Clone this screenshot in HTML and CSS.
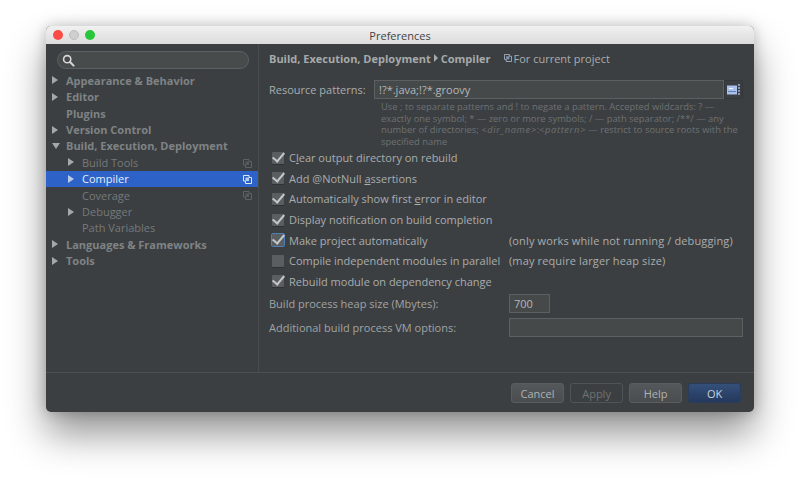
FILE: index.html
```html
<!DOCTYPE html>
<html lang="en">
<head>
<meta charset="utf-8">
<title>Preferences</title>
<link rel="stylesheet" href="styles.css">
</head>
<body>
<div class="window">
  <header class="titlebar">
    <div class="lights"><span class="light red"></span><span class="light gray"></span><span class="light green"></span></div>
    <div class="title">Preferences</div>
  </header>
  <div class="content">
    <nav class="sidebar">
      <div class="search">
        <svg class="search-icon" width="13" height="13" viewBox="0 0 13 13"><circle cx="5.2" cy="5.2" r="3.6" fill="none" stroke="#d8d8d8" stroke-width="1.6"/><path d="M8 8l3.6 3.6" stroke="#d8d8d8" stroke-width="2" stroke-linecap="round"/></svg>
      </div>
      <ul class="tree">
        <li class="row top"><span class="arrow"></span>Appearance &amp; Behavior</li>
        <li class="row top"><span class="arrow"></span>Editor</li>
        <li class="row top"><span class="noarrow"></span>Plugins</li>
        <li class="row top"><span class="arrow"></span>Version Control</li>
        <li class="row top"><span class="arrow down"></span>Build, Execution, Deployment</li>
        <li class="row sub"><span class="arrow"></span>Build Tools<svg class="copy" width="9" height="9" viewBox="0 0 9 9"><path d="M.5.5h5.500v2h2.500v6h-6v-2.500h-2z" fill="none" stroke="#5e6263"/><path d="M2.500 2.500h3.500v3.500h-3.500z" fill="#55595a"/></svg></li>
        <li class="row sub selected"><span class="arrow"></span>Compiler<svg class="copy" width="9" height="9" viewBox="0 0 9 9"><path d="M.5.5h5.500v2h2.500v6h-6v-2.500h-2z" fill="none" stroke="#dbe6f7"/><path d="M2.500 2.500h3.500v3.500h-3.500z" fill="#b8ccec"/></svg></li>
        <li class="row sub dim"><span class="noarrow"></span>Coverage<svg class="copy" width="9" height="9" viewBox="0 0 9 9"><path d="M.5.5h5.500v2h2.500v6h-6v-2.500h-2z" fill="none" stroke="#5e6263"/><path d="M2.500 2.500h3.500v3.500h-3.500z" fill="#55595a"/></svg></li>
        <li class="row sub"><span class="arrow"></span>Debugger</li>
        <li class="row sub"><span class="noarrow"></span>Path Variables</li>
        <li class="row top"><span class="arrow"></span>Languages &amp; Frameworks</li>
        <li class="row top"><span class="arrow"></span>Tools</li>
      </ul>
    </nav>
    <main class="panel">
      <div class="crumbs">
        <strong>Build, Execution, Deployment</strong><span class="crumb-arrow"></span><strong>Compiler</strong>
        <span class="scope"><svg width="8" height="8" viewBox="0 0 9 9"><path d="M.5.5h5.500v2h2.500v6h-6v-2.500h-2z" fill="none" stroke="#a9b4c4"/><path d="M2.500 2.500h3.500v3.500h-3.500z" fill="#7f95b5"/></svg>For current project</span>
      </div>
      <div class="pattern-row">
        <label class="pattern-label">Resource patterns:</label>
        <div class="input pattern-input">!?*.java;!?*.groovy</div>
        <button class="browse" type="button"><svg width="14" height="12" viewBox="0 0 14 12"><rect x="0" y="1.500" width="10" height="9" fill="#a9c1ea"/><rect x="2" y="4" width="4" height="1" fill="#f0f5ff"/><rect x="1" y="7" width="8" height="1" fill="#5f7fb8"/><path d="M11 0h2v2h-2zM11 3h2v2h-2zM11 6h2v2h-2zM11 9h2v2h-2z" fill="#8a97aa"/></svg></button>
      </div>
      <p class="hint">Use ; to separate patterns and ! to negate a pattern. Accepted wildcards: ? — exactly one symbol; * — zero or more symbols; / — path separator; /**/ — any number of directories; <i>&lt;dir_name&gt;</i>:<i>&lt;pattern&gt;</i> — restrict to source roots with the specified name</p>
      <ul class="options">
        <li class="option"><span class="check on"></span><span class="opt-label">C<u>l</u>ear output directory on rebuild</span></li>
        <li class="option"><span class="check on"></span><span class="opt-label">Add @NotNull <u>a</u>ssertions</span></li>
        <li class="option"><span class="check on"></span><span class="opt-label">Automatically show first <u>e</u>rror in editor</span></li>
        <li class="option"><span class="check on"></span><span class="opt-label">Display notification on build completion</span></li>
        <li class="option"><span class="check on focus"></span><span class="opt-label wide">Make project automatically</span><span class="note">(only works while not running / debugging)</span></li>
        <li class="option"><span class="check"></span><span class="opt-label wide">Compile independent modules in parallel</span><span class="note">(may require larger heap size)</span></li>
        <li class="option"><span class="check on"></span><span class="opt-label">Rebuild module on dependency change</span></li>
      </ul>
      <div class="field-row heap"><label class="field-label">Build process heap size (Mbytes):</label><div class="input heap-input">700</div></div>
      <div class="field-row vm"><label class="field-label">Additional build process VM options:</label><div class="input vm-input"></div></div>
    </main>
  </div>
  <footer class="footer">
    <button class="btn" type="button">Cancel</button>
    <button class="btn disabled" type="button">Apply</button>
    <button class="btn" type="button">Help</button>
    <button class="btn primary" type="button">OK</button>
  </footer>
</div>
</body>
</html>
```
FILE: styles.css
```css
* { box-sizing: border-box; }
html, body { margin: 0; height: 478px; overflow: hidden; background: #fff; }
body { padding: 26px 46px 0; font-family: "Open Sans", sans-serif; font-size: 11px; color: #a9adae; }
ul { list-style: none; margin: 0; padding: 0; }
.window { width: 708px; height: 386px; display: flex; flex-direction: column; background: #3c3f41; border-radius: 5px; box-shadow: 0 22px 38px rgba(0,0,0,.42), 0 0 14px rgba(0,0,0,.22); }
.titlebar { height: 18px; display: flex; align-items: center; position: relative; background: linear-gradient(#f1f1f1, #dcdcdc); border-radius: 5px 5px 0 0; flex: none; }
.lights { display: flex; gap: 6px; padding-left: 7px; }
.light { width: 10px; height: 10px; border-radius: 50%; }
.red { background: #fc4b46; }
.gray { background: #cfcfcf; border: 1px solid #bdbdbd; }
.green { background: #27c63b; }
.title { position: absolute; left: 0; right: 0; text-align: center; color: #444; font-size: 11px; }
.content { flex: 1; display: flex; min-height: 0; }
.sidebar { width: 213px; flex: none; border-right: 1px solid #494c4e; padding-top: 7px; }
.search { margin: 0 9px 0 11px; height: 18px; border: 1px solid #5c6061; border-radius: 9px; background: #484b4c; display: flex; align-items: center; padding-left: 4px; }
.search-icon { display: block; }
.tree { margin-top: 3.7px; }
.row { height: 16.4px; padding-bottom: 1px; display: flex; align-items: center; white-space: nowrap; position: relative; }
.top { padding-left: 6px; font-weight: 700; color: #7f8385; }
.sub { padding-left: 22px; color: #76797b; }
.arrow { width: 0; height: 0; margin-right: 8px; border-style: solid; border-width: 4px 0 4px 6px; border-color: transparent transparent transparent #a5a8a9; flex: none; }
.arrow.down { border-width: 6px 4px 0; border-color: #a5a8a9 transparent transparent; margin-right: 6px; }
.noarrow { width: 14px; flex: none; }
.selected { background: #2d62c8; color: #e6eefb; }
.selected .arrow { border-left-color: #b9c9e6; }
.copy { position: absolute; right: 6px; top: 4px; }
.panel { flex: 1; padding: 7px 11px 0 10px; min-width: 0; }
.crumbs { height: 14px; display: flex; align-items: center; white-space: nowrap; }
.crumbs strong { font-weight: 700; color: #a6aaab; }
.crumb-arrow { width: 0; height: 0; margin: 0 3px; border-style: solid; border-width: 4px 0 4px 4px; border-color: transparent transparent transparent #a6aaab; }
.scope { display: flex; align-items: center; gap: 2px; margin-left: 13px; }
.pattern-row { display: flex; align-items: center; margin-top: 15px; height: 19px; }
.pattern-label { width: 105px; flex: none; white-space: nowrap; }
.input { background: #45494a; border: 1px solid #5d6061; height: 19px; line-height: 17px; padding: 0 4px; color: #b4b7b8; }
.pattern-input { width: 350px; flex: none; }
.browse { width: 19px; height: 19px; border: 1px solid #34373a; border-radius: 2px; background: #3a3d42; padding: 0 0 0 2px; display: flex; align-items: center; }
.hint { margin: 2px 0 0 112px; font-size: 9.4px; line-height: 11.5px; color: #6d7173; width: 361px; }
.hint i { letter-spacing: .6px; }
.options { margin-top: .5px; }
.option { height: 20.6px; display: flex; align-items: center; white-space: nowrap; padding-left: 3px; }
.check { width: 12px; height: 12px; margin-right: 5px; flex: none; background: #5b5e60; border-radius: 1px; position: relative; box-shadow: 0 1px 0 #2f3133; }
.check.on::after { content: ""; position: absolute; left: 3px; top: -2px; width: 5px; height: 10px; border: solid #c4c7c8; border-width: 0 2px 2px 0; transform: rotate(40deg); }
.check.focus { outline: 1.5px solid #4f7fb5; }
.wide { width: 220px; flex: none; }
.note { letter-spacing: .13px; }
.field-row { display: flex; align-items: center; }
.heap { margin-top: 2.500px; }
.vm { margin-top: 5px; }
.field-label { width: 240px; flex: none; white-space: nowrap; color: #a0a4a5; }
.heap-input { width: 41px; }
.vm-input { width: 235px; }
.footer { height: 40px; flex: none; border-top: 1px solid #4d5051; display: flex; justify-content: flex-end; gap: 5.9px; padding: 10px 12.7px 0 0; border-radius: 0 0 5px 5px; }
.btn { width: 53.2px; height: 20px; padding: 0; font: inherit; color: #aeb1b2; background: linear-gradient(#55585a, #4a4d4f); border: 1px solid #5a5d5f; border-radius: 3px; }
.disabled { background: #3c3f41; border-color: #515456; color: #6f7274; }
.primary { background: linear-gradient(#34507a, #25395c); border-color: #2a3c5c; color: #c9d1de; }
```
